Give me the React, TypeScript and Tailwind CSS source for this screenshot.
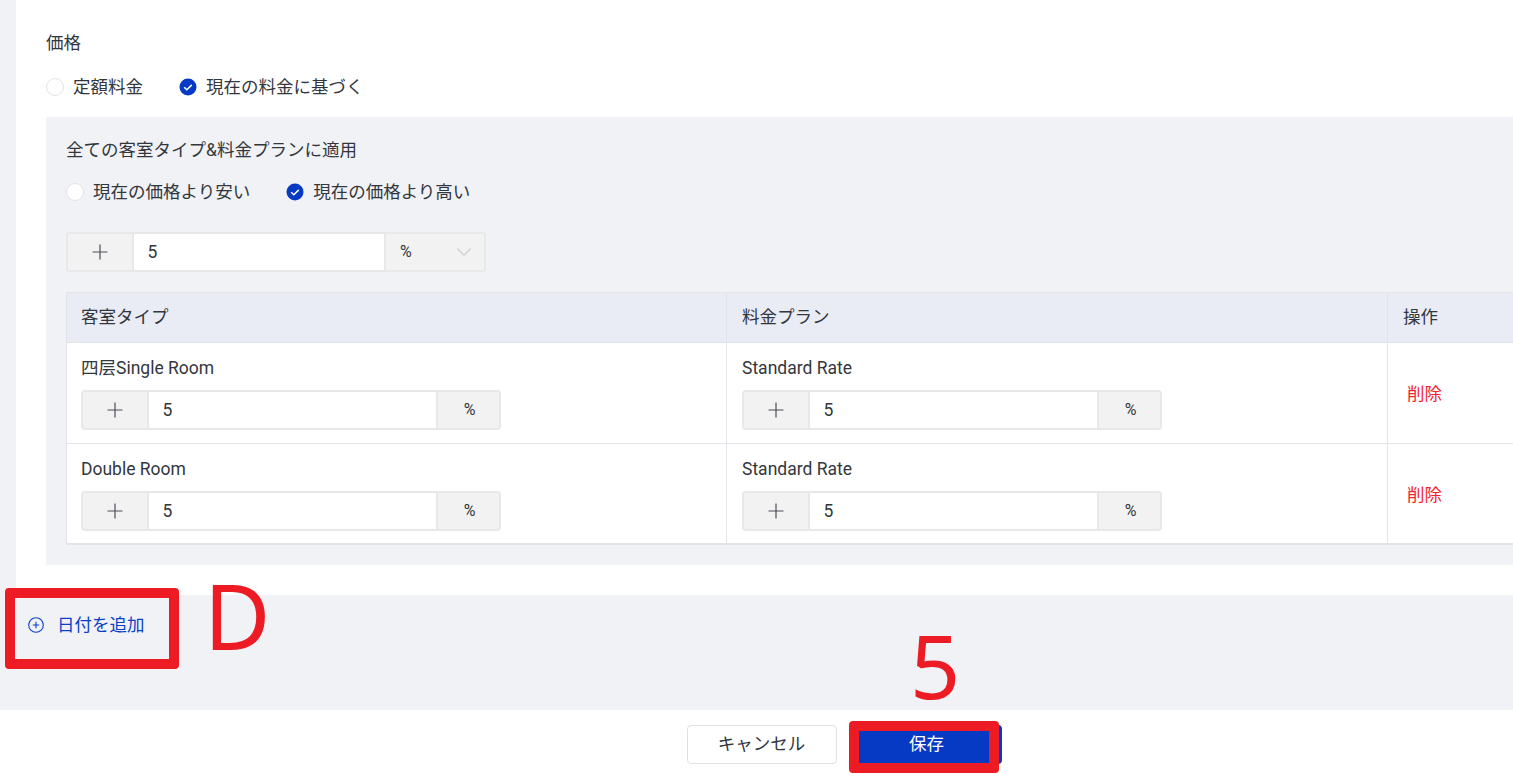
import * as React from "react";
import { ChevronDown } from "lucide-react";

function Radio({ label, checked }: { label: string; checked?: boolean }) {
  return (
    <label className="flex items-center gap-[9px]">
      {checked ? (
        <svg width="18" height="18" viewBox="0 0 18 18" className="shrink-0">
          <circle cx="9" cy="9" r="8.5" fill="#0639c4" />
          <path d="M5.2 9.2l2.6 2.5 5-4.8" fill="none" stroke="#fff" strokeWidth="1.5" />
        </svg>
      ) : (
        <span className="w-[18px] h-[18px] rounded-full bg-white border border-[#e2e3e6] shrink-0" />
      )}
      <span>{label}</span>
    </label>
  );
}

function PlusIcon() {
  return (
    <svg width="16" height="16" viewBox="0 0 16 16">
      <path d="M8 0.5v15M0.5 8h15" fill="none" stroke="#4a4f57" strokeWidth="1.2" />
    </svg>
  );
}

function AmountInput({ select }: { select?: boolean }) {
  return (
    <div className="flex w-[420px] h-10 rounded-[4px] border-2 border-[#e7e8ea] bg-[#f2f2f2] text-[#33373d]">
      <div className="w-[66px] flex items-center justify-center border-r-2 border-[#e7e8ea]">
        <PlusIcon />
      </div>
      <div className="flex-1 bg-white flex items-center pl-[13.5px] pt-px">5</div>
      {select ? (
        <div className="w-[100px] flex items-center justify-between border-l-2 border-[#e7e8ea] pl-[14px] pr-[7px] text-[16px]">
          %
          <ChevronDown className="w-[26px] h-[26px] text-[#c9cbd0]" strokeWidth={1} />
        </div>
      ) : (
        <div className="w-[63px] flex items-center justify-center border-l-2 border-[#e7e8ea] text-[16px] pl-[2px]">%</div>
      )}
    </div>
  );
}

function RoomCell({ title, px }: { title: string; px: string }) {
  return (
    <div className={"pt-[13px] border-r border-[#e2e4ea] " + px}>
      <div className="h-6 leading-6 mb-[10px]">{title}</div>
      <AmountInput />
    </div>
  );
}

const ROWS = ["四层Single Room", "Double Room"];

export default function App() {
  return (
    <div
      className="h-screen overflow-hidden flex flex-col bg-[#f0f2f6] text-[#33373d] text-[17.5px]"
      style={{ fontFamily: 'Roboto, "Noto Sans CJK JP", sans-serif' }}
    >
      <div className="flex-1 pl-4">
        <div className="h-[595px] bg-white pl-[30px] pt-[31px]">
          <div className="h-6 leading-6">価格</div>
          <div className="flex gap-[36px] mt-[20px] h-6 items-center">
            <Radio label="定額料金" />
            <Radio label="現在の料金に基づく" checked />
          </div>
          <div className="mt-[18px] h-[448px] bg-[#f0f2f6] pl-5 pt-[21px]">
            <div className="h-6 leading-6">全ての客室タイプ&料金プランに適用</div>
            <div className="flex gap-[36px] mt-[18px] h-6 items-center">
              <Radio label="現在の価格より安い" />
              <Radio label="現在の価格より高い" checked />
            </div>
            <div className="mt-[28px]">
              <AmountInput select />
            </div>
            <div className="mt-5 border border-b-2 border-r-0 border-[#e2e4ea] bg-white">
              <div className="grid grid-cols-[660px_661px_1fr] h-[50px] bg-[#e9ecf4] border-b border-[#e2e4ea] items-stretch">
                <div className="px-[14px] flex items-center border-r border-[#e2e4ea]">客室タイプ</div>
                <div className="px-[15px] flex items-center border-r border-[#e2e4ea]">料金プラン</div>
                <div className="px-[15px] flex items-center">操作</div>
              </div>
              {ROWS.map((r, i) => (
                <div
                  key={r}
                  className={"grid grid-cols-[660px_661px_1fr] " + (i === 0 ? "h-[101px] border-b border-[#e2e4ea]" : "h-[99px]")}
                >
                  <RoomCell title={r} px="px-[14px]" />
                  <RoomCell title="Standard Rate" px="px-[15px]" />
                  <div className="pl-[19px] flex items-center text-[#f5222d] pt-[3px]">削除</div>
                </div>
              ))}
            </div>
          </div>
        </div>
        <button type="button" className="flex items-center gap-[13px] ml-3 mt-[18px] h-6 text-[#0a3fc8]">
          <svg width="16" height="16" viewBox="0 0 16 16">
            <circle cx="8" cy="8" r="7.3" fill="none" stroke="#0a3fc8" strokeWidth="1.1" />
            <path d="M8 4.8v6.4M4.8 8h6.4" fill="none" stroke="#0a3fc8" strokeWidth="1.1" />
          </svg>
          日付を追加
        </button>
      </div>

      <div className="h-[64px] bg-white flex justify-center gap-[14px] pl-[175px] pt-[15px]">
        <button type="button" className="w-[150px] h-[39px] rounded-[4px] border border-[#dfe0e3] bg-white">
          キャンセル
        </button>
        <button type="button" className="w-[151px] h-[39px] rounded-[4px] bg-[#0639c4] text-white pl-px">
          保存
        </button>
      </div>

      {/* hand-drawn red markers on top of the screenshot */}
      <div className="absolute left-[5px] top-[588px] w-[174px] h-[81px] border-[10px] border-[#ed1c24] rounded-[4px]" />
      <div className="absolute left-[849px] top-[721px] w-[150px] h-[52px] border-[10px] border-[#ed1c24] rounded-[4px]" />
      <div className="absolute left-[204px] top-[553px] text-[91px] leading-[124px] text-[#ed1c24]" style={{ fontFamily: '"Noto Sans", sans-serif' }}>
        D
      </div>
      <div className="absolute left-[910px] top-[603px] text-[88px] leading-[124px] text-[#ed1c24]" style={{ fontFamily: '"Noto Sans", sans-serif' }}>
        5
      </div>
    </div>
  );
}
